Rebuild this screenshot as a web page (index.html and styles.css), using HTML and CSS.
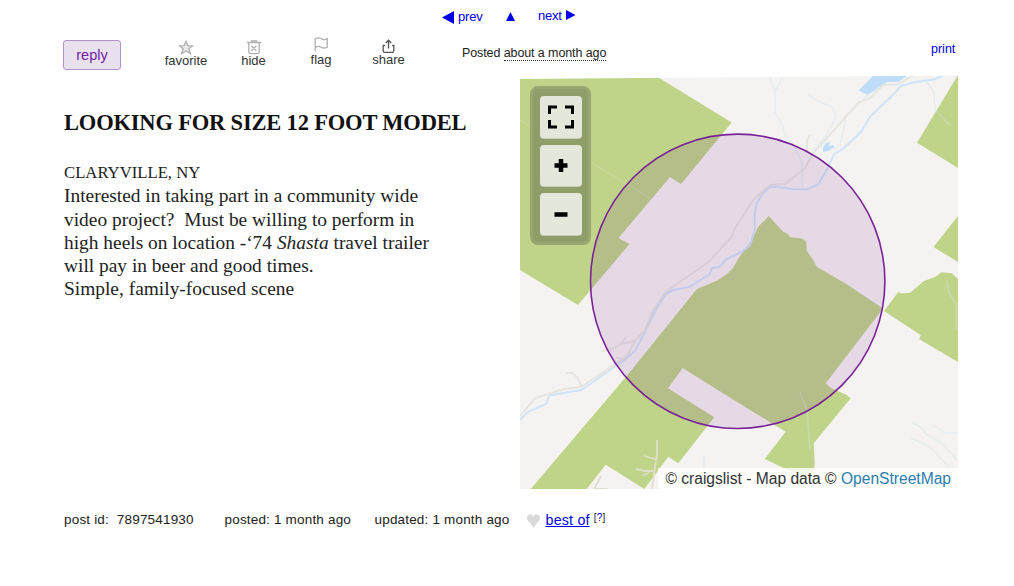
FILE: index.html
```
<!DOCTYPE html>
<html lang="en">
<head>
    <meta charset="UTF-8">
    <meta name="viewport" content="width=device-width, initial-scale=1.0">
    <title>Looking for size 12 foot model</title>
    <link rel="stylesheet" href="styles.css">
</head>
<body>
    <nav class="pager">
        <a class="prev" href="#"><svg width="12" height="13" viewBox="0 0 12 13"><path d="M0 6.5L12 0v13z"/></svg>prev</a>
        <a class="up" href="#" aria-label="up"><svg width="9" height="9" viewBox="0 0 9 9"><path d="M4.5 0L9 9H0z"/></svg></a>
        <a class="next" href="#">next<svg width="10" height="10" viewBox="0 0 10 10"><path d="M9.5 5L0 0v10z"/></svg></a>
    </nav>

    <header class="actions">
        <button class="reply">reply</button>
        <div class="action favorite">
            <svg width="16" height="15" viewBox="0 0 16 15"><path d="M8 1.3l1.8 4.3 4.9.2-3.8 3 1.4 4.7L8 10.9l-4.3 2.6 1.4-4.7-3.8-3 4.9-.2z"/></svg>
            <span>favorite</span>
        </div>
        <div class="action hide">
            <svg width="14" height="15" viewBox="0 0 14 15"><path d="M0 2.5h14M4.5 2.3V.8h5v1.5M1.8 2.7v9.2q0 1.8 1.8 1.8h6.8q1.8 0 1.8-1.8V2.7M4.4 5.8l5 5M9.4 5.8l-5 5"/></svg>
            <span>hide</span>
        </div>
        <div class="action flag">
            <svg width="14" height="15" viewBox="0 0 14 15"><path d="M1.2 14.5V1.8q3-1.7 6 0t6-.2v8.6q-3 1.6-6 0t-6 .2"/></svg>
            <span>flag</span>
        </div>
        <div class="action share">
            <svg width="14" height="15" viewBox="0 0 14 15"><path d="M2.9 6.5H1.2v5.2q0 1.6 1.6 1.6h7.4q1.6 0 1.6-1.6V6.5h-1.7M6.5 9.4V1.2M3.8 4l2.7-2.8L9.2 4"/></svg>
            <span>share</span>
        </div>
        <p class="posted">Posted <time>about a month ago</time></p>
        <a class="print" href="#">print</a>
    </header>

    <main class="posting">
        <section class="text">
            <h1>LOOKING FOR SIZE 12 FOOT MODEL</h1>
            <div class="body">
                <div class="place">CLARYVILLE, NY</div>
                <div>Interested in taking part in a community wide</div>
                <div>video project?&nbsp; Must be willing to perform in</div>
                <div>high heels on location -‘74 <i>Shasta</i> travel trailer</div>
                <div>will pay in beer and good times.</div>
                <div>Simple, family-focused scene</div>
            </div>
        </section>

        <section class="map">
            <svg class="tiles" width="438" height="414" viewBox="520 75 438 414">
                <rect class="land" x="520" y="75" width="438" height="414"/>
                <!-- forest -->
                <g class="forest">
                    <path d="M520 75H655L658.5 77.5 731.7 122.5 681 184 670 177 618.5 238 629.5 244 578 305 520 270z"/>
                    <path d="M768.7 216L775 223 783.3 231.7 788 234 790 237.3 801.7 238.3 806.3 241.7 806.7 250.7 813.3 260 816.7 266.7 846.7 284.3 883 308.5 825.7 383.3 831 388 846.7 395 850.7 398.3 813.7 443.3 814.7 462.7 813 482 764.7 459 785.7 431.7 735 400.7 682.7 368 668 388.3 714.3 417.3 678.3 463.3 668.3 456.7 644.3 489 605.7 464.7 586.7 489H530.7L626.7 376 696.7 289.3 716.7 280.7 727 274 733 268 738 259 753 238 758 227z"/>
                    <path d="M958 75L917 142.7 958 168z"/>
                    <path d="M958 216L933.5 247 958 262z"/>
                    <path d="M884 311L898.3 292 901.7 293.5 910 292.7 916.7 287.3 924 281 935 277 941.7 272.3 951.7 273.3 958 279V362L919.3 339.3 920.7 335z"/>
                </g>
                <path class="boundary" d="M520 120L650 198"/>
                <!-- water -->
                <g class="lake">
                    <path d="M858.5 90.5L874 75H909L898 82H887L868 95z"/>
                    <path d="M823 152V147L826 143 830 142 829 147 833 145 835 147 828 151z"/>
                </g>
                <g class="creek">
                    <path d="M769 75L775 92V112L783 126 784 133 795 148 802 163V188M784 75L775 91M808 95L820 102 832 107 836 117 831 127 824 138 813 152M868 95L846 116 843 132 840 145 833 150M925 80L934 92 935 109 949 125M800 392L807 410 810 450M947 281L949 292 956 304V330M704 456V470M912 422L922 428 926 434 943 444 957 460M911 438L929 446 949 467M933 425L945 433H958"/>
                </g>
                <path class="river" d="M943 75L935 79.3 915 82 900.7 86 895 92.7 870 116.7 861.7 131 843.3 148.7 834 154.3 826.7 170 817.7 185 806.7 189.3H793.3L781.7 187.3 769.3 187 761.7 195 756.7 203.3 754.7 213.3V230L750 245 741.7 252.3 735 255 726.7 259 719.3 267 712 268 709.3 274.3 700.7 280 690 286.7 673.3 290 666 294 656.7 308.3 643.3 335 635 350.7 626.7 358.3 616 365.7 581.7 390 549.3 395.3 546 404 528.3 411.7 520 420"/>
                <!-- roads -->
                <path class="road" d="M914 75L898.3 84.3 883.3 85 870 98.3 858.3 102.7 813.3 153.3 805 168.3 785 184 770 185 753.3 200 735 228.3 731.7 236.7 713.3 256.7 710 261 676.7 284 665 292.7 653.3 310 645 330 635 340.7 628.3 354 616 363.3 581.7 386.7 563.3 389.3 535 398.3 520 416M635 340.7L621 344 612 349 602 351M621 344L626 337M626 358L616 358M582 387L577 377 572 373H566M807 151V141L810 135"/>
                <path class="track" d="M657 440V453L652 489M644 456L655 459M636 469L645 471H653M643 475L649 473M601 476L594 489H607"/>
                <circle class="area" cx="737.7" cy="281.3" r="147.2"/>
                <!-- the top edge runs slightly askew -->
                <path class="edge" d="M519 75H959V75.5L519 79z"/>
            </svg>
            <div class="controls">
                <button aria-label="fullscreen"><svg width="26" height="24" viewBox="0 0 26 24"><path class="corners" d="M1.5 9V2H9M17 2H24.5V9M24.5 15V22H17M9 22H1.5V15"/></svg></button>
                <button aria-label="zoom in"><svg width="26" height="24" viewBox="0 0 26 24"><path class="sign" d="M6.5 12.5H19.5M13 6V19"/></svg></button>
                <button aria-label="zoom out"><svg width="26" height="24" viewBox="0 0 26 24"><path class="sign" d="M6.5 12.5H19.5"/></svg></button>
            </div>
            <p class="credit">© craigslist - Map data © <a href="#">OpenStreetMap</a></p>
        </section>
    </main>

    <footer class="info">
        <span class="post-id">post id:&nbsp; 7897541930</span>
        <span class="posted-on">posted: 1 month ago</span>
        <span class="updated">updated: 1 month ago</span>
        <svg class="heart" width="13" height="14" viewBox="0 0 13 14"><path d="M6.5 14Q4.8 10.5 1.5 7.2-1 4 .7 1.7 2 0 3.8.2 5.8.5 6.5 3 7.2.5 9.2.2 11 0 12.3 1.7 14 4 11.5 7.2 8.2 10.5 6.5 14z"/></svg>
        <a class="best" href="#">best of</a>
        <span class="help">[<a href="#">?</a>]</span>
    </footer>
</body>
</html>
```
FILE: styles.css
```
* {
    box-sizing: border-box;
}

body {
    margin: 0;
    width: 1014px;
    height: 586px;
    overflow: hidden;
    background: #fff;
    color: #222;
    font-family: "Liberation Sans", Arial, sans-serif;
}

p, h1 {
    margin: 0;
}

a {
    color: #0000e6;
    text-decoration: none;
}

svg {
    display: block;
    flex: none;
}

button {
    padding: 0;
    font-family: inherit;
}

/* top paging links */
.pager {
    display: flex;
    height: 36px;
    padding: 9px 0 0 442px;
    font-size: 13px;
    line-height: 15px;
}

.pager a {
    display: flex;
    white-space: nowrap;
}

.pager svg {
    fill: #0000e6;
}

.prev {
    width: 64px;
    gap: 4px;
    letter-spacing: -0.2px;
}

.prev svg {
    margin-top: 2px;
}

.up {
    width: 32px;
}

.up svg {
    margin-top: 3px;
}

.next {
    gap: 4px;
    margin-top: -1px;
    letter-spacing: -0.2px;
}

.next svg {
    margin-top: 2px;
}

/* action row */
.actions {
    display: flex;
    align-items: flex-start;
    height: 39px;
    padding-left: 63px;
}

.reply {
    width: 58px;
    height: 30px;
    margin: 4px 36px 0 0;
    padding-bottom: 1px;
    border: 1px solid #b690cc;
    border-radius: 3px;
    background: #e9e1ee;
    color: #7124a0;
    font-size: 14.5px;
}

.action {
    display: flex;
    flex-direction: column;
    align-items: center;
    width: 58px;
    margin-right: 9.5px;
    padding-top: 4px;
    color: #333;
    font-size: 13px;
    line-height: 15px;
}

.action svg {
    fill: none;
    stroke: #b0b0b0;
    stroke-width: 1.3;
}

.action span {
    margin-top: -2px;
}

.favorite svg {
    fill: #e8e8e8;
}

.flag {
    padding-top: 1px;
}

.flag span {
    margin-top: 0;
}

.share {
    padding-top: 3px;
}

.share svg {
    stroke: #555;
}

.posted {
    width: 469px;
    margin: 10px 0 0 35px;
    font-size: 12.5px;
    letter-spacing: -0.1px;
    line-height: 14px;
}

.posted time {
    display: inline-block;
    border-bottom: 1px dotted #333;
}

.print {
    margin-top: 6px;
    font-size: 12.5px;
    line-height: 15px;
}

/* posting text and map */
.posting {
    display: grid;
    grid-template-columns: 456px 438px;
    height: 414px;
    padding-left: 64px;
    font-family: "Liberation Serif", "Times New Roman", serif;
}

h1 {
    padding-top: 34px;
    font-size: 22.5px;
    letter-spacing: -0.18px;
    line-height: 28px;
    color: #111;
    white-space: nowrap;
}

.body {
    padding-top: 24px;
    font-size: 19.42px;
    line-height: 23.3px;
    white-space: nowrap;
}

.place {
    font-size: 16.7px;
}

.map {
    position: relative;
    font-family: "Liberation Sans", Arial, sans-serif;
}

.land {
    fill: #f4f3f1;
}

.forest {
    fill: #bfd488;
}

.boundary {
    fill: none;
    stroke: #c5d697;
    stroke-width: 1.5;
}

.lake {
    fill: #bfddfb;
}

.creek {
    fill: none;
    stroke: #d2e3ee;
    stroke-width: 1.5;
    stroke-opacity: 0.4;
}

.river {
    fill: none;
    stroke: #cfe3f9;
    stroke-width: 2;
    stroke-linejoin: round;
}

.road {
    fill: none;
    stroke: #e7e5df;
    stroke-width: 2;
    stroke-linejoin: round;
}

.track {
    fill: none;
    stroke: #dedfcb;
    stroke-width: 1.8;
}

.area {
    fill: #701f94;
    fill-opacity: 0.12;
    stroke: #7a2298;
    stroke-width: 1.6;
}

.edge {
    fill: #fff;
}

.controls {
    position: absolute;
    left: 10px;
    top: 11px;
    display: flex;
    flex-direction: column;
    align-items: center;
    gap: 6px;
    width: 61px;
    height: 159px;
    padding-top: 7px;
    border: 3px solid #98a76f;
    border-radius: 8px;
    background: #8f9e68;
}

.controls button {
    display: flex;
    align-items: center;
    justify-content: center;
    width: 42px;
    height: 42.5px;
    border: 0;
    border-bottom: 1px solid #c6cbbd;
    border-radius: 4px;
    background: #e4e8da;
}

.controls path {
    fill: none;
    stroke: #000;
}

.corners {
    stroke-width: 3;
}

.sign {
    stroke-width: 4.5;
}

.credit {
    position: absolute;
    right: 0;
    bottom: 0;
    width: 300px;
    height: 21px;
    padding-right: 7px;
    background: rgba(255, 255, 255, 0.8);
    color: #333;
    font-size: 15.6px;
    line-height: 21px;
    text-align: right;
    white-space: nowrap;
}

.credit a {
    color: #2e7fae;
}

/* footer details */
.info {
    display: flex;
    align-items: flex-start;
    padding: 22px 0 0 64px;
    font-size: 13.5px;
    letter-spacing: 0.18px;
    line-height: 17px;
    white-space: nowrap;
}

.post-id {
    width: 160.5px;
}

.posted-on {
    width: 150px;
}

.updated {
    width: 152px;
}

.heart {
    margin: 3px 6px 0 0;
    fill: #d9d9d9;
}

.best {
    margin-top: 1px;
    font-size: 14.3px;
    text-decoration: underline;
}

.help {
    margin: -2px 0 0 4px;
    font-size: 10px;
}
```
